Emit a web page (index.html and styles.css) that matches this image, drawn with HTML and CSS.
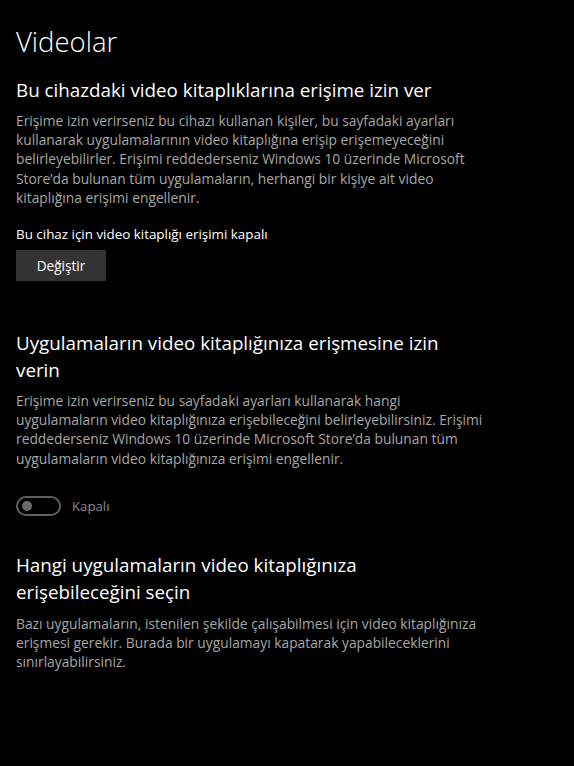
FILE: index.html
```html
<!DOCTYPE html>
<html lang="tr">
<head>
<meta charset="utf-8">
<title>Videolar</title>
<link rel="stylesheet" href="styles.css">
</head>
<body>
<main class="page">
  <h1 class="title">Videolar</h1>

  <section class="group first">
    <h2 class="heading">Bu cihazdaki video kitaplıklarına erişime izin ver</h2>
    <p class="desc">Erişime izin verirseniz bu cihazı kullanan kişiler, bu sayfadaki ayarları<br>kullanarak uygulamalarının video kitaplığına erişip erişemeyeceğini<br>belirleyebilirler. Erişimi reddederseniz Windows 10 üzerinde Microsoft<br>Store’da bulunan tüm uygulamaların, herhangi bir kişiye ait video<br>kitaplığına erişimi engellenir.</p>
    <p class="status">Bu cihaz için video kitaplığı erişimi kapalı</p>
    <button class="btn" type="button">Değiştir</button>
  </section>

  <section class="group second">
    <h2 class="heading">Uygulamaların video kitaplığınıza erişmesine izin<br>verin</h2>
    <p class="desc">Erişime izin verirseniz bu sayfadaki ayarları kullanarak hangi<br>uygulamaların video kitaplığınıza erişebileceğini belirleyebilirsiniz. Erişimi<br>reddederseniz Windows 10 üzerinde Microsoft Store’da bulunan tüm<br>uygulamaların video kitaplığınıza erişimi engellenir.</p>
    <div class="toggle-row">
      <span class="toggle"><span class="knob"></span></span>
      <span class="toggle-label">Kapalı</span>
    </div>
  </section>

  <section class="group third">
    <h2 class="heading">Hangi uygulamaların video kitaplığınıza<br>erişebileceğini seçin</h2>
    <p class="desc loose">Bazı uygulamaların, istenilen şekilde çalışabilmesi için video kitaplığınıza<br>erişmesi gerekir. Burada bir uygulamayı kapatarak yapabileceklerini<br>sınırlayabilirsiniz.</p>
  </section>
</main>
</body>
</html>
```

FILE: styles.css
```css
html, body {
  margin: 0;
  padding: 0;
  background: #000;
}
body {
  font-family: "Open Sans", "Noto Sans", sans-serif;
  color: #fff;
  width: 574px;
  height: 766px;
  overflow: hidden;
}
.page {
  padding: 22px 16px 0 16px;
  width: 530px;
  white-space: nowrap;
}
.title {
  margin: 0;
  font-size: 27.5px;
  font-weight: 300;
  line-height: 40px;
}
.group.first {
  margin-top: 15px;
}
.group.second {
  margin-top: 49px;
}
.group.third {
  margin-top: 36px;
}
.heading {
  margin: 0;
  font-size: 18.8px;
  font-weight: 400;
  line-height: 27px;
}
.desc {
  margin: 7px 0 0 0;
  font-size: 13.8px;
  line-height: 19.2px;
  color: #a6a6a6;
}
.desc.loose {
  margin-top: 8px;
}
.status {
  margin: 18px 0 0 0;
  font-size: 13.4px;
  line-height: 19px;
  color: #fff;
}
.btn {
  margin-top: 6px;
  width: 90px;
  height: 31px;
  border: 0;
  background: #333;
  color: #fff;
  font-family: inherit;
  font-size: 13.6px;
  padding: 0;
}
.toggle-row {
  margin-top: 28px;
  display: flex;
  align-items: center;
  gap: 11px;
}
.toggle {
  box-sizing: border-box;
  width: 45px;
  height: 20px;
  border: 2px solid #5f5f5f;
  border-radius: 10px;
  display: flex;
  align-items: center;
  padding-left: 4px;
}
.knob {
  width: 10px;
  height: 10px;
  border-radius: 50%;
  background: #6a6a6a;
}
.toggle-label {
  font-size: 13.2px;
  color: #8a8a8a;
}
```
